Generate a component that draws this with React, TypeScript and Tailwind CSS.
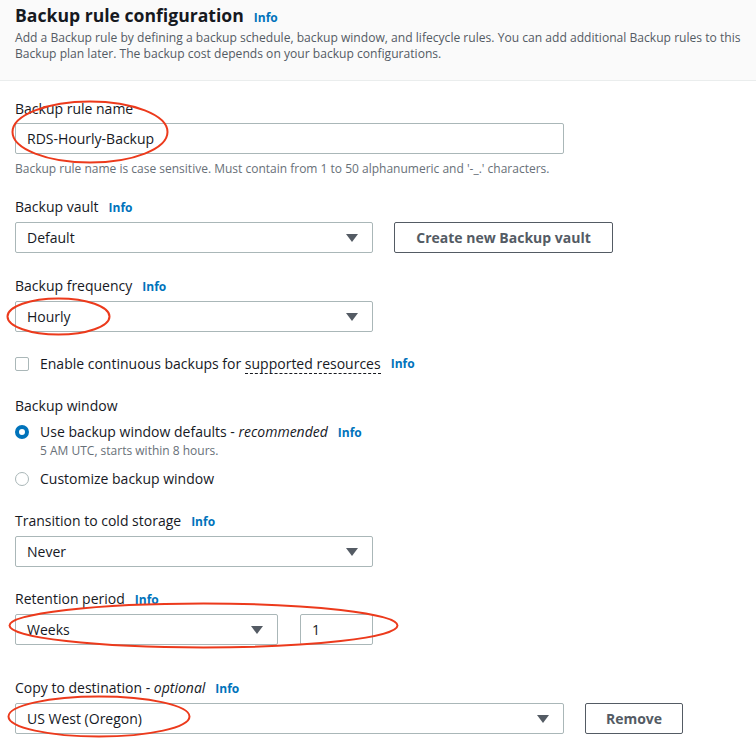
import React from 'react';

const font = { fontFamily: '"Open Sans", "Noto Sans", Arial, sans-serif' };

function Info() {
  return <span className="text-[12px] font-bold text-[#0073bb] ml-[10px]">Info</span>;
}

function Caret() {
  return (
    <svg width="12" height="8" viewBox="0 0 12 8" className="shrink-0">
      <path d="M0 0 H12 L6 8 Z" fill="#545b64" />
    </svg>
  );
}

function Select({ value, className }: { value: string; className: string }) {
  return (
    <div className={`h-[31px] border border-[#aab7b8] rounded-[2px] bg-white flex items-center justify-between pl-[11px] pr-[14px] ${className}`}>
      <span className="text-[14px] text-[#16191f]">{value}</span>
      <Caret />
    </div>
  );
}

function Label({ children, info = true }: { children: React.ReactNode; info?: boolean }) {
  return (
    <div className="flex items-baseline text-[14px] text-[#16191f] leading-[20px] mb-[4px]">
      <span>{children}</span>
      {info && <Info />}
    </div>
  );
}

function Ring({ x, y, w, h }: { x: number; y: number; w: number; h: number }) {
  return (
    <svg
      className="absolute pointer-events-none"
      style={{ left: x, top: y, width: w, height: h }}
      viewBox={`0 0 ${w} ${h}`}
    >
      <ellipse cx={w / 2} cy={h / 2} rx={w / 2 - 1.5} ry={h / 2 - 1.5} fill="none" stroke="#ec3a1c" strokeWidth="2" />
    </svg>
  );
}

export default function App() {
  return (
    <div className="relative w-[756px] h-[752px] bg-white overflow-hidden" style={font}>
      <header className="bg-[#fafafa] border-b border-[#eaeded] px-[15px] pt-[2px] h-[81px]">
        <div className="flex items-baseline">
          <h2 className="text-[17.6px] font-bold text-[#16191f] leading-[26px]">Backup rule configuration</h2>
          <Info />
        </div>
        <p className="text-[12.1px] leading-[16px] text-[#545b64] mt-[2px]">
          Add a Backup rule by defining a backup schedule, backup window, and lifecycle rules. You can add additional Backup rules to this Backup plan later. The backup cost depends on your backup configurations.
        </p>
      </header>

      <div className="px-[15px] pt-[18px]">
        <Label info={false}>Backup rule name</Label>
        <div className="w-[549px] h-[31px] border border-[#aab7b8] rounded-[2px] flex items-center pl-[11px] text-[14px] text-[#16191f]">
          RDS-Hourly-Backup
        </div>
        <p className="text-[12px] text-[#687078] mt-[7px] leading-[16px]">
          Backup rule name is case sensitive. Must contain from 1 to 50 alphanumeric and '-_.' characters.
        </p>

        <div className="mt-[20px]">
          <Label>Backup vault</Label>
          <div className="flex items-center gap-[21px]">
            <Select value="Default" className="w-[358px]" />
            <button className="h-[31px] w-[219px] border border-[#545b64] rounded-[2px] text-[14px] font-bold text-[#545b64]">
              Create new Backup vault
            </button>
          </div>
        </div>

        <div className="mt-[23px]">
          <Label>Backup frequency</Label>
          <Select value="Hourly" className="w-[358px]" />
        </div>

        <div className="mt-[21px] flex items-center">
          <span className="w-[14px] h-[14px] border border-[#aab7b8] rounded-[2px] mr-[11px]" />
          <span className="text-[14px] text-[#16191f]">
            Enable continuous backups for{' '}
            <span className="border-b border-dashed border-[#16191f]">supported resources</span>
          </span>
          <Info />
        </div>

        <div className="mt-[22px]">
          <div className="text-[14px] text-[#16191f] leading-[20px] mb-[6px]">Backup window</div>
          <div className="flex items-start">
            <span className="mt-[3px] w-[14px] h-[14px] rounded-full border-[4px] border-[#0073bb] mr-[11px]" />
            <div>
              <div className="flex items-baseline text-[14px] text-[#16191f] leading-[20px]">
                <span>
                  Use backup window defaults - <i>recommended</i>
                </span>
                <Info />
              </div>
              <div className="text-[12px] text-[#687078] leading-[16px]">5 AM UTC, starts within 8 hours.</div>
            </div>
          </div>
          <div className="flex items-center mt-[9px]">
            <span className="w-[14px] h-[14px] rounded-full border border-[#aab7b8] mr-[11px]" />
            <span className="text-[14px] text-[#16191f]">Customize backup window</span>
          </div>
        </div>

        <div className="mt-[22px]">
          <Label>Transition to cold storage</Label>
          <Select value="Never" className="w-[358px]" />
        </div>

        <div className="mt-[22px]">
          <Label>Retention period</Label>
          <div className="flex items-center gap-[22px]">
            <Select value="Weeks" className="w-[263px]" />
            <div className="w-[73px] h-[31px] border border-[#aab7b8] rounded-[2px] flex items-center pl-[11px] text-[14px] text-[#16191f]">
              1
            </div>
          </div>
        </div>

        <div className="mt-[33px]">
          <div className="flex items-baseline text-[14px] text-[#16191f] leading-[20px] mb-[4px]">
            <span>
              Copy to destination - <i>optional</i>
            </span>
            <Info />
          </div>
          <div className="flex items-center gap-[21px]">
            <Select value="US West (Oregon)" className="w-[549px]" />
            <button className="h-[31px] w-[98px] border border-[#545b64] rounded-[2px] text-[14px] font-bold text-[#545b64]">
              Remove
            </button>
          </div>
        </div>
      </div>

      <Ring x={11} y={100} w={158} h={64} />
      <Ring x={6} y={297} w={105} h={39} />
      <Ring x={8} y={602} w={391} h={47} />
      <Ring x={7} y={695} w={184} h={43} />
    </div>
  );
}
